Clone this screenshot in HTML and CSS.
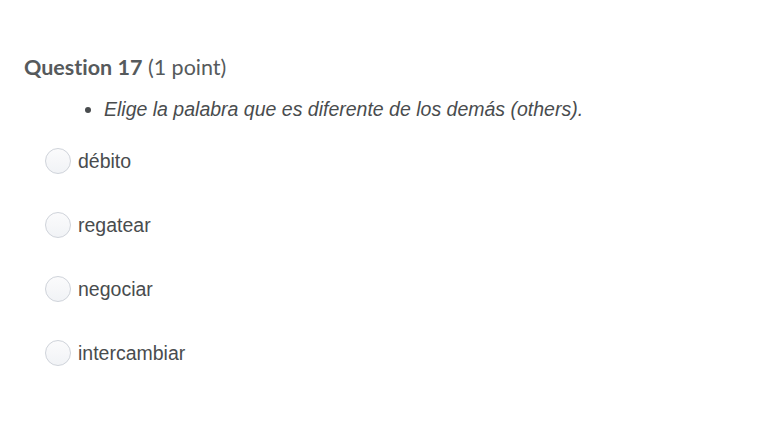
FILE: index.html
```html
<!DOCTYPE html>
<html lang="en">
<head>
    <meta charset="UTF-8">
    <title>Question 17</title>
    <link rel="stylesheet" href="styles.css">
</head>
<body>
    <div class="question">
        <h2 class="title"><strong>Question 17</strong> <span class="points">(1 point)</span></h2>
        <ul class="prompt">
            <li>Elige la palabra que es diferente de los demás (others).</li>
        </ul>
        <div class="choices">
            <label class="choice"><span class="radio"></span>débito</label>
            <label class="choice"><span class="radio"></span>regatear</label>
            <label class="choice"><span class="radio"></span>negociar</label>
            <label class="choice"><span class="radio"></span>intercambiar</label>
        </div>
    </div>
</body>
</html>
```

FILE: styles.css
```css
body {
    margin: 0;
    background: #fff;
    font-family: 'Liberation Sans', Arial, sans-serif;
    color: #494c4e;
}

.question {
    padding: 52px 24px 0 24px;
}

.title {
    margin: 0;
    font-family: Lato, sans-serif;
    font-size: 21.5px;
    font-weight: normal;
    font-variant-ligatures: none;
    line-height: 30px;
    color: #565a5c;
}

.title strong {
    font-weight: bold;
}

.prompt {
    margin: 14px 0 0 0;
    padding-left: 80px;
    font-size: 19.5px;
    font-style: italic;
    line-height: 26px;
}

.choices {
    display: flex;
    flex-direction: column;
    gap: 38px;
    margin-top: 26px;
}

.choice {
    display: flex;
    align-items: center;
    gap: 7px;
    height: 26px;
    padding-left: 21px;
    font-size: 19.5px;
}

.radio {
    width: 26px;
    height: 26px;
    box-sizing: border-box;
    border: 1px solid #cfd3da;
    border-radius: 50%;
    background: linear-gradient(#fbfbfc, #f1f3f6);
}
```
